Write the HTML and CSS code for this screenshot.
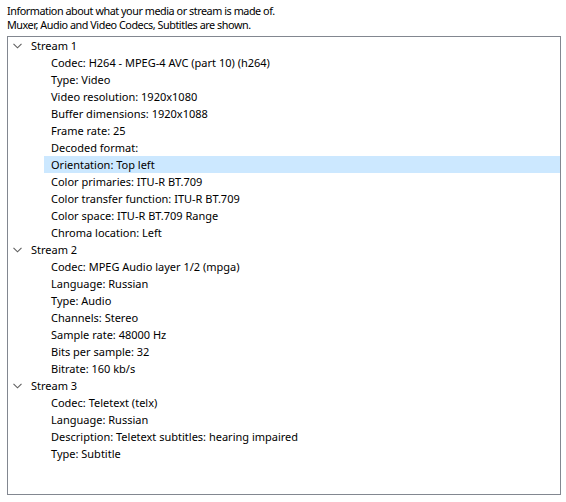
FILE: index.html
```html
<!DOCTYPE html>
<html>
<head>
<meta charset="utf-8">
<link rel="stylesheet" href="styles.css">
</head>
<body>
<div class="intro">
  <p>Information about what your media or stream is made of.</p>
  <p>Muxer, Audio and Video Codecs, Subtitles are shown.</p>
</div>
<div class="tree">
  <div class="group">
    <div class="head"><svg class="chev" width="9" height="6" viewBox="0 0 9 6"><path d="M0.5 0.8 L4.5 4.8 L8.5 0.8" fill="none" stroke="#5f5f5f" stroke-width="1.1"/></svg><span>Stream 1</span></div>
    <div class="item">Codec: H264 - MPEG-4 AVC (part 10) (h264)</div>
    <div class="item">Type: Video</div>
    <div class="item">Video resolution: 1920x1080</div>
    <div class="item">Buffer dimensions: 1920x1088</div>
    <div class="item">Frame rate: 25</div>
    <div class="item">Decoded format:</div>
    <div class="item selected">Orientation: Top left</div>
    <div class="item">Color primaries: ITU-R BT.709</div>
    <div class="item">Color transfer function: ITU-R BT.709</div>
    <div class="item">Color space: ITU-R BT.709 Range</div>
    <div class="item">Chroma location: Left</div>
  </div>
  <div class="group">
    <div class="head"><svg class="chev" width="9" height="6" viewBox="0 0 9 6"><path d="M0.5 0.8 L4.5 4.8 L8.5 0.8" fill="none" stroke="#5f5f5f" stroke-width="1.1"/></svg><span>Stream 2</span></div>
    <div class="item">Codec: MPEG Audio layer 1/2 (mpga)</div>
    <div class="item">Language: Russian</div>
    <div class="item">Type: Audio</div>
    <div class="item">Channels: Stereo</div>
    <div class="item">Sample rate: 48000 Hz</div>
    <div class="item">Bits per sample: 32</div>
    <div class="item">Bitrate: 160 kb/s</div>
  </div>
  <div class="group">
    <div class="head"><svg class="chev" width="9" height="6" viewBox="0 0 9 6"><path d="M0.5 0.8 L4.5 4.8 L8.5 0.8" fill="none" stroke="#5f5f5f" stroke-width="1.1"/></svg><span>Stream 3</span></div>
    <div class="item">Codec: Teletext (telx)</div>
    <div class="item">Language: Russian</div>
    <div class="item">Description: Teletext subtitles: hearing impaired</div>
    <div class="item">Type: Subtitle</div>
  </div>
</div>
</body>
</html>
```
FILE: styles.css
```css
html, body {
  margin: 0;
  padding: 0;
  background: #ffffff;
}
body {
  font-family: "Noto Sans", "Open Sans", sans-serif;
  font-size: 11px;
  color: #000000;
  width: 566px;
  height: 502px;
  overflow: hidden;
}
.intro {
  padding: 4px 7px 0 7px;
  height: 36px;
  box-sizing: border-box;
}
.intro p {
  margin: 0;
  line-height: 14px;
  font-size: 10.8px;
  letter-spacing: -0.45px;
}
.tree {
  margin-left: 7px;
  width: 554px;
  height: 459px;
  box-sizing: border-box;
  border: 1px solid #828790;
  background: #ffffff;
}
.head, .item {
  height: 17px;
  line-height: 17px;
  white-space: nowrap;
}
.head {
  display: flex;
  align-items: center;
}
.chev {
  margin-left: 5px;
  margin-right: 9px;
  flex: none;
}
.item {
  margin-left: 36px;
  padding-left: 7px;
}
.item.selected {
  background: #cce8ff;
}
```
